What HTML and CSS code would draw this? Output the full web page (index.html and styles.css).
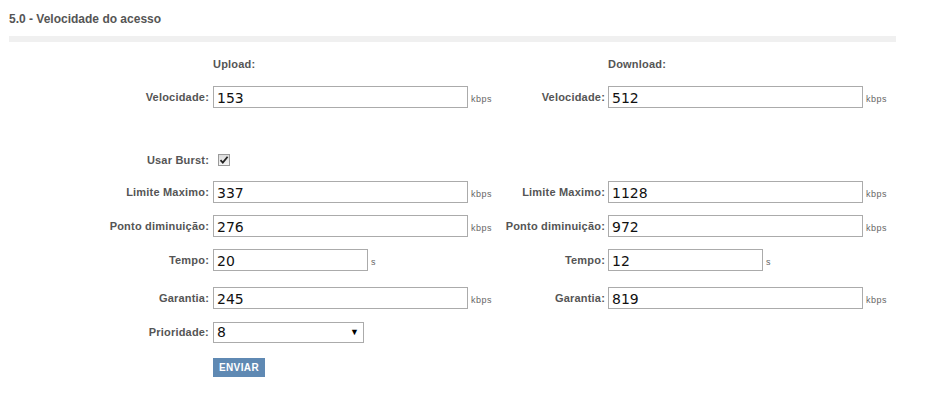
FILE: index.html
```html
<!DOCTYPE html>
<html lang="pt">
<head>
<meta charset="utf-8">
<title>Velocidade do acesso</title>
<link rel="stylesheet" href="styles.css">
</head>
<body>
<div class="page">
  <h1 class="title">5.0 - Velocidade do acesso</h1>
  <div class="bar"></div>
  <form class="form">
    <div class="cell"></div>
    <div class="cell head">Upload:</div>
    <div class="cell"></div>
    <div class="cell head">Download:</div>

    <label class="cell lbl">Velocidade:</label>
    <div class="cell field"><input class="txt" type="text" value="153"><span class="unit">kbps</span></div>
    <label class="cell lbl lbl2">Velocidade:</label>
    <div class="cell field"><input class="txt" type="text" value="512"><span class="unit">kbps</span></div>

    <div class="cell spacer"></div>

    <label class="cell lbl">Usar Burst:</label>
    <div class="cell field"><span class="check"><svg width="10" height="10" viewBox="0 0 10 10"><path d="M1.5 5.2 L3.8 7.6 L8.6 1.8" fill="none" stroke="#222" stroke-width="1.8"/></svg></span></div>
    <div class="cell"></div>
    <div class="cell"></div>

    <label class="cell lbl">Limite Maximo:</label>
    <div class="cell field"><input class="txt" type="text" value="337"><span class="unit">kbps</span></div>
    <label class="cell lbl lbl2">Limite Maximo:</label>
    <div class="cell field"><input class="txt" type="text" value="1128"><span class="unit">kbps</span></div>

    <label class="cell lbl">Ponto diminuição:</label>
    <div class="cell field"><input class="txt" type="text" value="276"><span class="unit">kbps</span></div>
    <label class="cell lbl lbl2">Ponto diminuição:</label>
    <div class="cell field"><input class="txt" type="text" value="972"><span class="unit">kbps</span></div>

    <label class="cell lbl">Tempo:</label>
    <div class="cell field"><input class="txt short" type="text" value="20"><span class="unit">s</span></div>
    <label class="cell lbl lbl2">Tempo:</label>
    <div class="cell field"><input class="txt short" type="text" value="12"><span class="unit">s</span></div>

    <label class="cell lbl">Garantia:</label>
    <div class="cell field"><input class="txt" type="text" value="245"><span class="unit">kbps</span></div>
    <label class="cell lbl lbl2">Garantia:</label>
    <div class="cell field"><input class="txt" type="text" value="819"><span class="unit">kbps</span></div>

    <label class="cell lbl">Prioridade:</label>
    <div class="cell field"><span class="selwrap"><select class="sel"><option>8</option></select><span class="arrow">&#9660;</span></span></div>
    <div class="cell"></div>
    <div class="cell"></div>

    <div class="cell"></div>
    <div class="cell field"><button class="btn" type="button">ENVIAR</button></div>
    <div class="cell"></div>
    <div class="cell"></div>
  </form>
</div>
</body>
</html>
```

FILE: styles.css
```css
html, body {
  margin: 0;
  padding: 0;
  background: #fff;
}
.page {
  width: 936px;
  height: 403px;
  font-family: "Liberation Sans", Arial, sans-serif;
  color: #555;
}
.title {
  margin: 0;
  padding: 12px 0 0 9px;
  font-size: 12px;
  line-height: 14px;
  font-weight: bold;
  color: #555;
  height: 24px;
}
.bar {
  margin-left: 9px;
  width: 887px;
  height: 6px;
  background: #f0f0f0;
}
.form {
  display: grid;
  grid-template-columns: 204px 291px 104px 320px;
  grid-template-rows: 33px 34px 31px 30px 34px 34px 34px 42px 26px 44px;
  padding: 5px 0 0 9px;
  margin: 0;
  align-items: center;
}
.cell {
  font-size: 11px;
  font-weight: bold;
  letter-spacing: 0.2px;
  color: #555;
  white-space: nowrap;
}
.spacer {
  grid-column: 1 / -1;
}
.lbl {
  text-align: right;
  padding-right: 4px;
}
.lbl2 {
  padding-right: 3px;
}
.field {
  display: flex;
  align-items: center;
}
.txt {
  box-sizing: border-box;
  width: 255px;
  height: 22px;
  margin: 0;
  padding: 1px 3px 0;
  border: 1px solid #ababab;
  font-family: "DejaVu Sans", Verdana, sans-serif;
  font-size: 14px;
  letter-spacing: 0;
  color: #111;
  background: #fff;
  outline: none;
}
.txt.short {
  width: 155px;
}
.unit {
  margin-left: 3px;
  padding-top: 4px;
  font-size: 9px;
  font-weight: normal;
  letter-spacing: 0.5px;
  color: #666;
}
.check {
  box-sizing: border-box;
  display: flex;
  align-items: center;
  justify-content: center;
  width: 12px;
  height: 12px;
  margin-left: 5px;
  border: 1px solid #9a9a9a;
  background: linear-gradient(#dcdcdc, #f4f4f4);
}
.selwrap {
  position: relative;
  display: inline-block;
}
.sel {
  box-sizing: border-box;
  width: 151px;
  height: 21px;
  margin: 0;
  padding: 0 3px;
  border: 1px solid #ababab;
  border-radius: 0;
  background: #fff;
  -webkit-appearance: none;
  appearance: none;
  font-family: "DejaVu Sans", Verdana, sans-serif;
  font-size: 14px;
  color: #111;
  outline: none;
}
.arrow {
  position: absolute;
  right: 5px;
  top: 5px;
  font-size: 9px;
  line-height: 10px;
  color: #000;
  pointer-events: none;
}
.btn {
  box-sizing: border-box;
  width: 52px;
  height: 19px;
  margin: 0;
  padding: 0;
  border: none;
  background: #5f89b3;
  color: #fff;
  font-family: "Liberation Sans", Arial, sans-serif;
  font-size: 10px;
  font-weight: bold;
  letter-spacing: 0.4px;
}
```
